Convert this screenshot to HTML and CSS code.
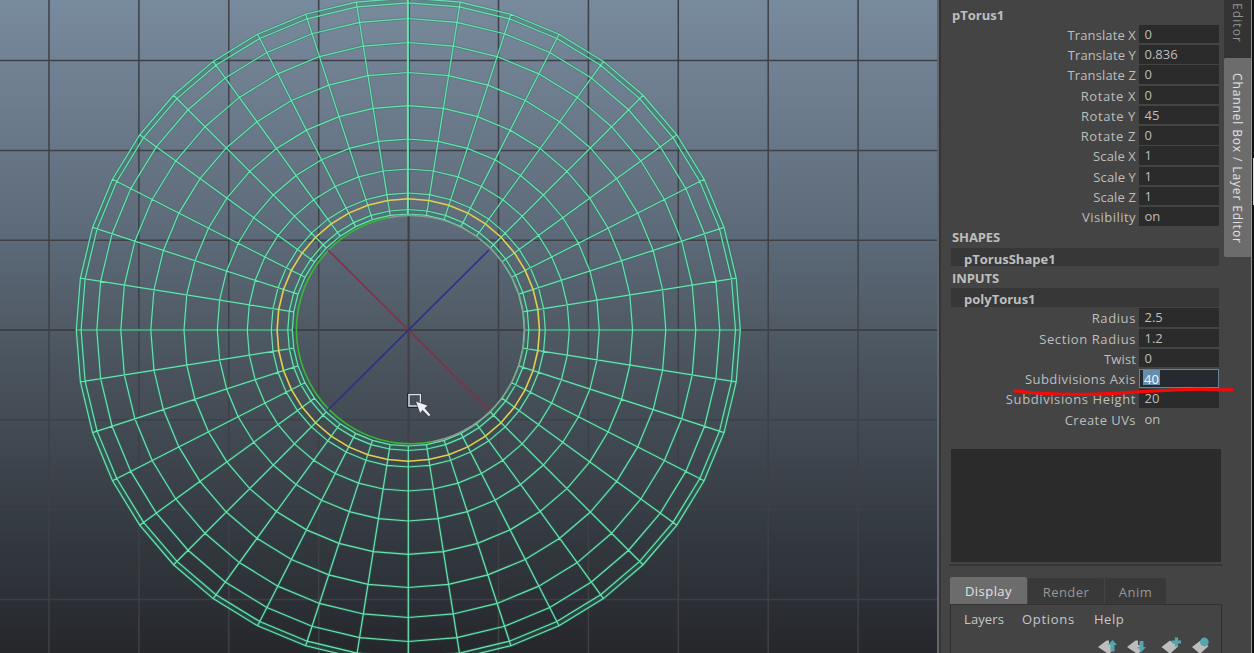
FILE: index.html
```
<!DOCTYPE html>
<html lang="en">
<head>
<meta charset="utf-8">
<title>Channel Box</title>
<link rel="stylesheet" href="styles.css">
</head>
<body>
<main class="app">
  <svg class="viewport" width="937" height="653" viewBox="0 0 937 653">
    <g id="grid" class="grid"></g>
    <g id="mesh" class="mesh"></g>
    <path class="axis-x" d="M328 250L489 410"/>
    <path class="axis-z" d="M489 250L328 410"/>
    <g class="cursor">
      <rect x="407.5" y="393.5" width="14" height="14" fill="none" stroke="#22262c" stroke-width="1"/>
      <rect x="409" y="394.500" width="11.5" height="11.5" fill="none" stroke="#dde1e4" stroke-width="1.4"/>
      <path d="M415.5 401L428 405.500L425 408.200L430.800 415L428.800 416.600L422.600 410.300L420 413.500Z" fill="#eef1f6" stroke="#262b33" stroke-width=".6"/>
    </g>
  </svg>
  <aside class="panel">
    <section class="channels">
      <div class="name">pTorus1</div>
      <div class="row"><label>Translate X</label><span class="field">0</span></div>
      <div class="row"><label>Translate Y</label><span class="field">0.836</span></div>
      <div class="row"><label>Translate Z</label><span class="field">0</span></div>
      <div class="row wide"><label>Rotate X</label><span class="field">0</span></div>
      <div class="row wide"><label>Rotate Y</label><span class="field">45</span></div>
      <div class="row wide"><label>Rotate Z</label><span class="field">0</span></div>
      <div class="row"><label>Scale X</label><span class="field">1</span></div>
      <div class="row"><label>Scale Y</label><span class="field">1</span></div>
      <div class="row"><label>Scale Z</label><span class="field">1</span></div>
      <div class="row sub"><label>Visibility</label><span class="field">on</span></div>
      <div class="heading">SHAPES</div>
      <div class="node"><span>pTorusShape1</span></div>
      <div class="heading">INPUTS</div>
      <div class="node"><span>polyTorus1</span></div>
      <div class="row wide"><label>Radius</label><span class="field">2.5</span></div>
      <div class="row wide"><label>Section Radius</label><span class="field">1.2</span></div>
      <div class="row"><label>Twist</label><span class="field">0</span></div>
      <div class="row sub"><label>Subdivisions Axis</label><span class="field editing"><mark>40</mark></span></div>
      <div class="row wide"><label>Subdivisions Height</label><span class="field">20</span></div>
      <div class="row sub"><label>Create UVs</label><span class="field plain">on</span></div>
      <div class="blank"></div>
      <div class="divider"></div>
      <nav class="tabs">
        <span class="tab active">Display</span><span class="tab render">Render</span><span class="tab anim">Anim</span>
      </nav>
      <div class="layers">
        <div class="menu"><span class="m1">Layers</span><span class="m2">Options</span><span>Help</span></div>
        <svg class="tools" width="125" height="22" viewBox="1090 631 125 22">
          <g fill="#bdbdbd">
            <path d="M1098 647L1106.500 640.500H1109V645H1113V650L1110 653H1107Z"/>
            <path d="M1127 647L1135.500 640.500H1138V645H1142V650L1139 653H1136Z"/>
            <path d="M1161.500 647L1170 640.500L1178.500 646L1171 653H1169Z"/>
            <path d="M1192 647L1200.500 640.500L1208.500 646L1201 653H1199Z"/>
          </g>
          <g fill="#55a5ae">
            <path d="M1112.500 640L1117 645H1114.500V651.500H1110.500V645H1108Z"/>
            <path d="M1141.500 652L1146 647H1143.500V641H1139.500V647H1137Z"/>
            <path d="M1174.800 637.500H1178V640.500H1181V643.500H1178V646.500H1174.800V643.500H1172V640.500H1174.800Z"/>
            <circle cx="1204.300" cy="642" r="4.400"/>
          </g>
        </svg>
      </div>
    </section>
    <nav class="side">
      <span class="side-tab first">Editor</span>
      <span class="side-tab current">Channel Box / Layer Editor</span>
    </nav>
  </aside>
  <div class="screen-edge"><i></i></div>
</main>
<svg class="annotation" width="224" height="12" viewBox="1012 385 224 12">
  <path d="M1015 390.800C1037 394 1072 395 1104 393.800C1144 392.300 1166 389.200 1200 389.300Q1216 390.100 1232 389.600"/>
</svg>
<script src="mesh.js"></script>
</body>
</html>
```
FILE: styles.css
```
* { box-sizing: border-box; }
body { margin: 0; width: 1254px; height: 653px; overflow: hidden; background: #444; font-family: "Open Sans", "Noto Sans", sans-serif; font-size: 13px; color: #bebebe; }
.app { display: flex; height: 653px; overflow: hidden; }
.viewport { display: block; flex: none; background: linear-gradient(#788a9d 0, #6b7a8b 120px, #5c6978 240px, #4e5862 340px, #434b54 420px, #343a41 530px, #2c2f36 600px, #25272b 653px); }
.grid path { stroke: #3e4046; stroke-width: 1.5; fill: none; }
.grid .major { stroke-width: 2.2; stroke: #414145; }
.mesh { fill: none; }
.mesh .shadow { stroke: #1f7c62; stroke-opacity: .42; stroke-width: 2.9; }
.mesh .wire { stroke: #69e2ad; stroke-width: 1.2; }
.mesh .band { stroke: #368267; stroke-opacity: .2; }
.mesh .selected { stroke: #dfd34e; stroke-width: 1.6; }
.axis-x { stroke: #862e40; stroke-width: 1.5; }
.axis-z { stroke: #292c91; stroke-width: 1.5; }
.panel { display: flex; width: 315px; flex: none; border-left: 2px solid #62666b; border-right: 1px solid #929292; background: #444; box-shadow: inset 2px 0 #363636; }
.channels { width: 285px; flex: none; }
.name { height: 24.75px; padding: 5px 0 0 13px; line-height: 20px; font-weight: 700; font-size: 13px; }
.row { display: flex; height: 20.25px; }
.row label { width: 197px; flex: none; text-align: right; line-height: 21.300px; letter-spacing: .12px; }
.row.wide label { letter-spacing: .6px; }
.row.sub label { letter-spacing: .45px; }
.field { width: 80px; height: 18.500px; margin-left: 3px; padding-left: 5.500px; line-height: 19px; background: #2b2b2b; }
.plain { background: none; line-height: 19px; }
.editing { border: 1.500px solid #60849c; background: #242a30; padding-left: 3px; line-height: 17px; height: 19px; }
mark { display: inline-block; height: 15px; line-height: 18px; background: #658eae; color: #f4f8fc; padding: 0 1px; }
.heading { height: 20.25px; padding-left: 13px; line-height: 21px; font-size: 13px; font-weight: 700; letter-spacing: -.1px; }
.node { height: 20.25px; padding-left: 12px; }
.node span { display: block; width: 268px; height: 18.500px; padding-left: 13px; line-height: 22px; font-weight: 700; background: #373737; }
.blank { width: 270px; height: 113px; margin: 19.25px 0 0 12px; background: #2b2b2b; }
.divider { width: 274px; height: 2px; margin: 2px 0 0 10px; background: #373737; }
.tabs { display: flex; height: 27px; margin: 11px 0 0 11px; gap: 1px; align-items: flex-end; }
.tab { height: 26px; line-height: 29px; text-align: center; background: #393939; color: #979797; border-radius: 2px 2px 0 0; letter-spacing: .45px; }
.tab.active { width: 77px; height: 27px; line-height: 28px; background: #6c6c6c; color: #e2e2e2; }
.render { width: 76px; }
.anim { width: 61px; }
.layers { width: 272px; height: 60px; margin-left: 11px; border: 1px solid #303030; }
.menu { display: flex; height: 26px; padding-left: 13px; line-height: 28px; letter-spacing: .1px; color: #c7c7c7; }
.m1 { width: 58px; }
.m2 { width: 72px; letter-spacing: .7px; }
.menu span:last-child { letter-spacing: .5px; }
.tools { display: block; margin-left: 139px; }
.side { width: 27px; }
.side-tab { display: block; writing-mode: vertical-rl; width: 27px; line-height: 28px; font-size: 12px; white-space: nowrap; }
.first { height: 58px; padding-top: 3px; background: #333; color: #929292; letter-spacing: 1.1px; }
.current { height: 199px; padding-top: 15px; background: #6c6c6c; color: #e2e2e2; letter-spacing: .87px; border-radius: 2px 0 0 2px; }
.screen-edge { width: 2px; background: #111; padding: 158px 0 0 1px; }
.screen-edge i { display: block; height: 47px; background: #ddd; }
.annotation { position: absolute; left: 1012px; top: 385px; }
.annotation path { fill: none; stroke: #f50a0a; stroke-width: 3.3; stroke-linecap: round; }
```
FILE: mesh.js
```
const NS = "http://www.w3.org/2000/svg";
const cx = 408.3, cy = 330, segments = 40;
const grid = document.getElementById("grid");
const mesh = document.getElementById("mesh");

function add(parent, d, cls) {
  const path = document.createElementNS(NS, "path");
  path.setAttribute("d", d);
  path.setAttribute("class", cls);
  parent.appendChild(path);
  return path;
}
function point(r, i) {
  const a = i * 2 * Math.PI / segments;
  return (cx + r * Math.cos(a)).toFixed(2) + " " + (cy + r * Math.sin(a)).toFixed(2);
}
function ring(r) {
  return "M" + Array.from({ length: segments }, (_, i) => point(r, i)).join("L") + "Z";
}
for (let i = -4; i <= 5; i++) {
  add(grid, `M${cx + 0.3 + i * 89.9} 0V653`, i ? "minor" : "major");
}
for (let i = -3; i <= 3; i++) {
  add(grid, `M0 ${cy + i * 89.8}H937`, i ? "minor" : "major");
}
add(mesh, ring(329.5), "band").style.strokeWidth = 5;
add(mesh, ring(118.5), "band").style.strokeWidth = 6;

let wires = [332, 327.2, 311.5, 287.5, 257.5, 224.3, 191, 161, 137, 120.5, 116].map(ring).join("");
for (let i = 0; i < segments; i++) wires += "M" + point(332, i) + "L" + point(116, i);
add(mesh, wires, "shadow");
add(mesh, wires, "wire");
add(mesh, "M407.500 0V214", "wire");
add(mesh, ring(131.2), "selected");

const inner = add(mesh, "M388 217.800A113.800 113.800 0 0 0 433 441.500", "inner");
inner.style.stroke = "#35b835";
inner.style.strokeWidth = 1.6;
const innerRight = add(mesh, "M388 217.800A113.800 113.800 0 0 1 433 441.500", "inner");
innerRight.style.stroke = "#8c9992";
innerRight.style.strokeWidth = 1.4;
```
